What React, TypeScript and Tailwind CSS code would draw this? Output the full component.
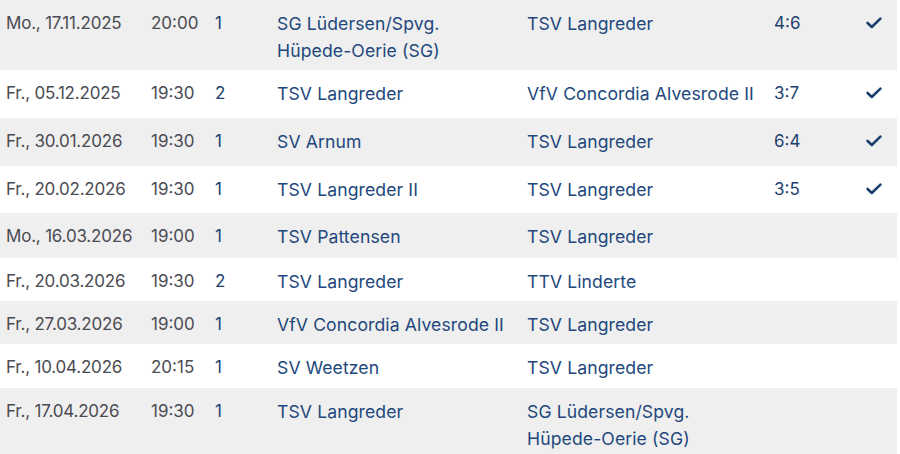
import { Fragment } from 'react';

type Match = {
  datum: string;
  zeit: string;
  runde: string;
  heim: string[];
  gast: string[];
  ergebnis: string;
  fertig: boolean;
  h: string;
};

const matches: Match[] = [
  { datum: 'Mo., 17.11.2025', zeit: '20:00', runde: '1', heim: ['SG Lüdersen/Spvg.', 'Hüpede-Oerie (SG)'], gast: ['TSV Langreder'], ergebnis: '4:6', fertig: true, h: 'h-[70px]' },
  { datum: 'Fr., 05.12.2025', zeit: '19:30', runde: '2', heim: ['TSV Langreder'], gast: ['VfV Concordia Alvesrode II'], ergebnis: '3:7', fertig: true, h: 'h-[48px]' },
  { datum: 'Fr., 30.01.2026', zeit: '19:30', runde: '1', heim: ['SV Arnum'], gast: ['TSV Langreder'], ergebnis: '6:4', fertig: true, h: 'h-[48px]' },
  { datum: 'Fr., 20.02.2026', zeit: '19:30', runde: '1', heim: ['TSV Langreder II'], gast: ['TSV Langreder'], ergebnis: '3:5', fertig: true, h: 'h-[47px]' },
  { datum: 'Mo., 16.03.2026', zeit: '19:00', runde: '1', heim: ['TSV Pattensen'], gast: ['TSV Langreder'], ergebnis: '', fertig: false, h: 'h-[45px]' },
  { datum: 'Fr., 20.03.2026', zeit: '19:30', runde: '2', heim: ['TSV Langreder'], gast: ['TTV Linderte'], ergebnis: '', fertig: false, h: 'h-[43px]' },
  { datum: 'Fr., 27.03.2026', zeit: '19:00', runde: '1', heim: ['VfV Concordia Alvesrode II'], gast: ['TSV Langreder'], ergebnis: '', fertig: false, h: 'h-[43px]' },
  { datum: 'Fr., 10.04.2026', zeit: '20:15', runde: '1', heim: ['SV Weetzen'], gast: ['TSV Langreder'], ergebnis: '', fertig: false, h: 'h-[44px]' },
  { datum: 'Fr., 17.04.2026', zeit: '19:30', runde: '1', heim: ['TSV Langreder'], gast: ['SG Lüdersen/Spvg.', 'Hüpede-Oerie (SG)'], ergebnis: '', fertig: false, h: 'h-[71px]' },
];

function Check() {
  return (
    <svg width="16" height="12" viewBox="0 0 16 12" fill="none" className="mt-[17px]">
      <path d="M1.6 6 L5.8 10 L14.4 1.6" stroke="#1d3f6e" strokeWidth="2.6" strokeLinecap="round" strokeLinejoin="round" />
    </svg>
  );
}

function Lines({ names }: { names: string[] }) {
  return (
    <>
      {names.map((t, j) => (
        <Fragment key={j}>
          {j > 0 && <br />}
          {t}
        </Fragment>
      ))}
    </>
  );
}

export default function App() {
  return (
    <div className="w-[897px] bg-white font-['Inter',sans-serif] text-[17px] leading-[27px]">
      {matches.map((m, i) => (
        <div
          key={i}
          className={`grid grid-cols-[145px_64px_62px_250px_247px_1fr_auto] ${m.h} ${i % 2 === 0 ? 'bg-[#efefef]' : 'bg-white'}`}
        >
          <div className="pl-[6px] pt-[10px] text-[#4b4b52] tracking-[-0.2px]">{m.datum}</div>
          <div className="pl-[6px] pt-[10px] text-[#4b4b52]">{m.zeit}</div>
          <div className="pl-[6px] pt-[10px] text-[#1d3f6e]">{m.runde}</div>
          <div className="pl-[6px] pt-[10px] text-[#22477c] text-[17.6px] tracking-[0.1px]">
            <Lines names={m.heim} />
          </div>
          <div className="pl-[6px] pt-[10px] text-[#22477c] text-[17.6px] tracking-[0.1px]">
            <Lines names={m.gast} />
          </div>
          <div className="pl-[6px] pt-[10px] text-[#1d3f6e]">{m.ergebnis}</div>
          <div className="pr-[15px]">{m.fertig && <Check />}</div>
        </div>
      ))}
    </div>
  );
}
